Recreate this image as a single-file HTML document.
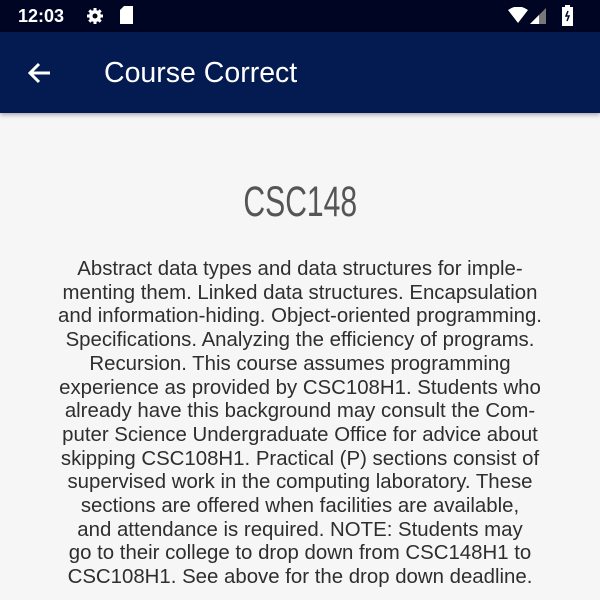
<!DOCTYPE html>
<html><head><style>
body{margin:0;width:600px;height:600px;overflow:hidden;background:#f6f6f6;font-family:"Liberation Sans",sans-serif;}
.sb{position:absolute;top:0;left:0;width:600px;height:32px;background:#010524;color:#fff;}
.tb{position:absolute;top:32px;left:0;width:600px;height:81px;background:#031b50;color:#fff;box-shadow:0 2px 4px rgba(0,0,0,.3);}
.title{position:absolute;left:104px;top:25px;font-size:28.5px;}
.h{position:absolute;top:178px;left:0;width:600px;text-align:center;color:#555;font-size:43px;}
.h span{display:inline-block;transform:scaleX(.7);}
.body{position:absolute;top:258px;left:0;width:600px;text-align:center;color:#2e2e2e;font-size:20.4px;line-height:23.7px;}
.body div{white-space:nowrap;}
</style></head><body>
<div class="sb">
<div style="position:absolute;left:18px;top:6px;font-size:18px;font-weight:bold;">12:03</div>
<svg style="position:absolute;left:86px;top:7px" width="18" height="18" viewBox="0 0 18 18"><circle cx="9" cy="9" r="6" fill="#fff"/><g stroke="#fff" stroke-width="3"><line x1="9" y1="1" x2="9" y2="17"/><line x1="1" y1="9" x2="17" y2="9"/><line x1="3.3" y1="3.3" x2="14.7" y2="14.7"/><line x1="14.7" y1="3.3" x2="3.3" y2="14.7"/></g><circle cx="9" cy="9" r="2.5" fill="#010524"/></svg>
<svg style="position:absolute;left:120px;top:6px" width="13" height="18" viewBox="0 0 13 18"><path d="M4 0H13V18H0V4Z" fill="#fff"/></svg>
<svg style="position:absolute;left:508px;top:7px" width="20" height="17" viewBox="0 0 20 17"><path d="M0 3Q10 -4 20 3L10 16Z" fill="#fff"/></svg>
<svg style="position:absolute;left:530px;top:8px" width="16" height="16" viewBox="0 0 16 16"><path d="M16 0V16H0Z" fill="#777"/><path d="M9 7V16H0Z" fill="#fff"/></svg>
<svg style="position:absolute;left:562px;top:5px" width="11" height="21" viewBox="0 0 11 21"><rect x="3" y="0" width="5" height="3" fill="#fff"/><rect x="0" y="2" width="11" height="19" fill="#fff"/><path d="M6 6L4 11H7L5 16" stroke="#010524" stroke-width="1.5" fill="none"/></svg>
</div>
<div class="tb">
<svg style="position:absolute;left:27px;top:30px" width="24" height="22" viewBox="0 0 24 22"><path d="M23 11H3M12 2L3 11L12 20" stroke="#fff" stroke-width="3" fill="none"/></svg>
<div class="title">Course Correct</div>
</div>
<div class="h"><span>CSC148</span></div>
<div class="body">
<div>Abstract data types and data structures for imple-</div>
<div>menting them. Linked data structures. Encapsulation</div>
<div>and information-hiding. Object-oriented programming.</div>
<div>Specifications. Analyzing the efficiency of programs.</div>
<div>Recursion. This course assumes programming</div>
<div>experience as provided by CSC108H1. Students who</div>
<div>already have this background may consult the Com-</div>
<div>puter Science Undergraduate Office for advice about</div>
<div>skipping CSC108H1. Practical (P) sections consist of</div>
<div>supervised work in the computing laboratory. These</div>
<div>sections are offered when facilities are available,</div>
<div>and attendance is required. NOTE: Students may</div>
<div>go to their college to drop down from CSC148H1 to</div>
<div>CSC108H1. See above for the drop down deadline.</div>
</div>
</body></html>
